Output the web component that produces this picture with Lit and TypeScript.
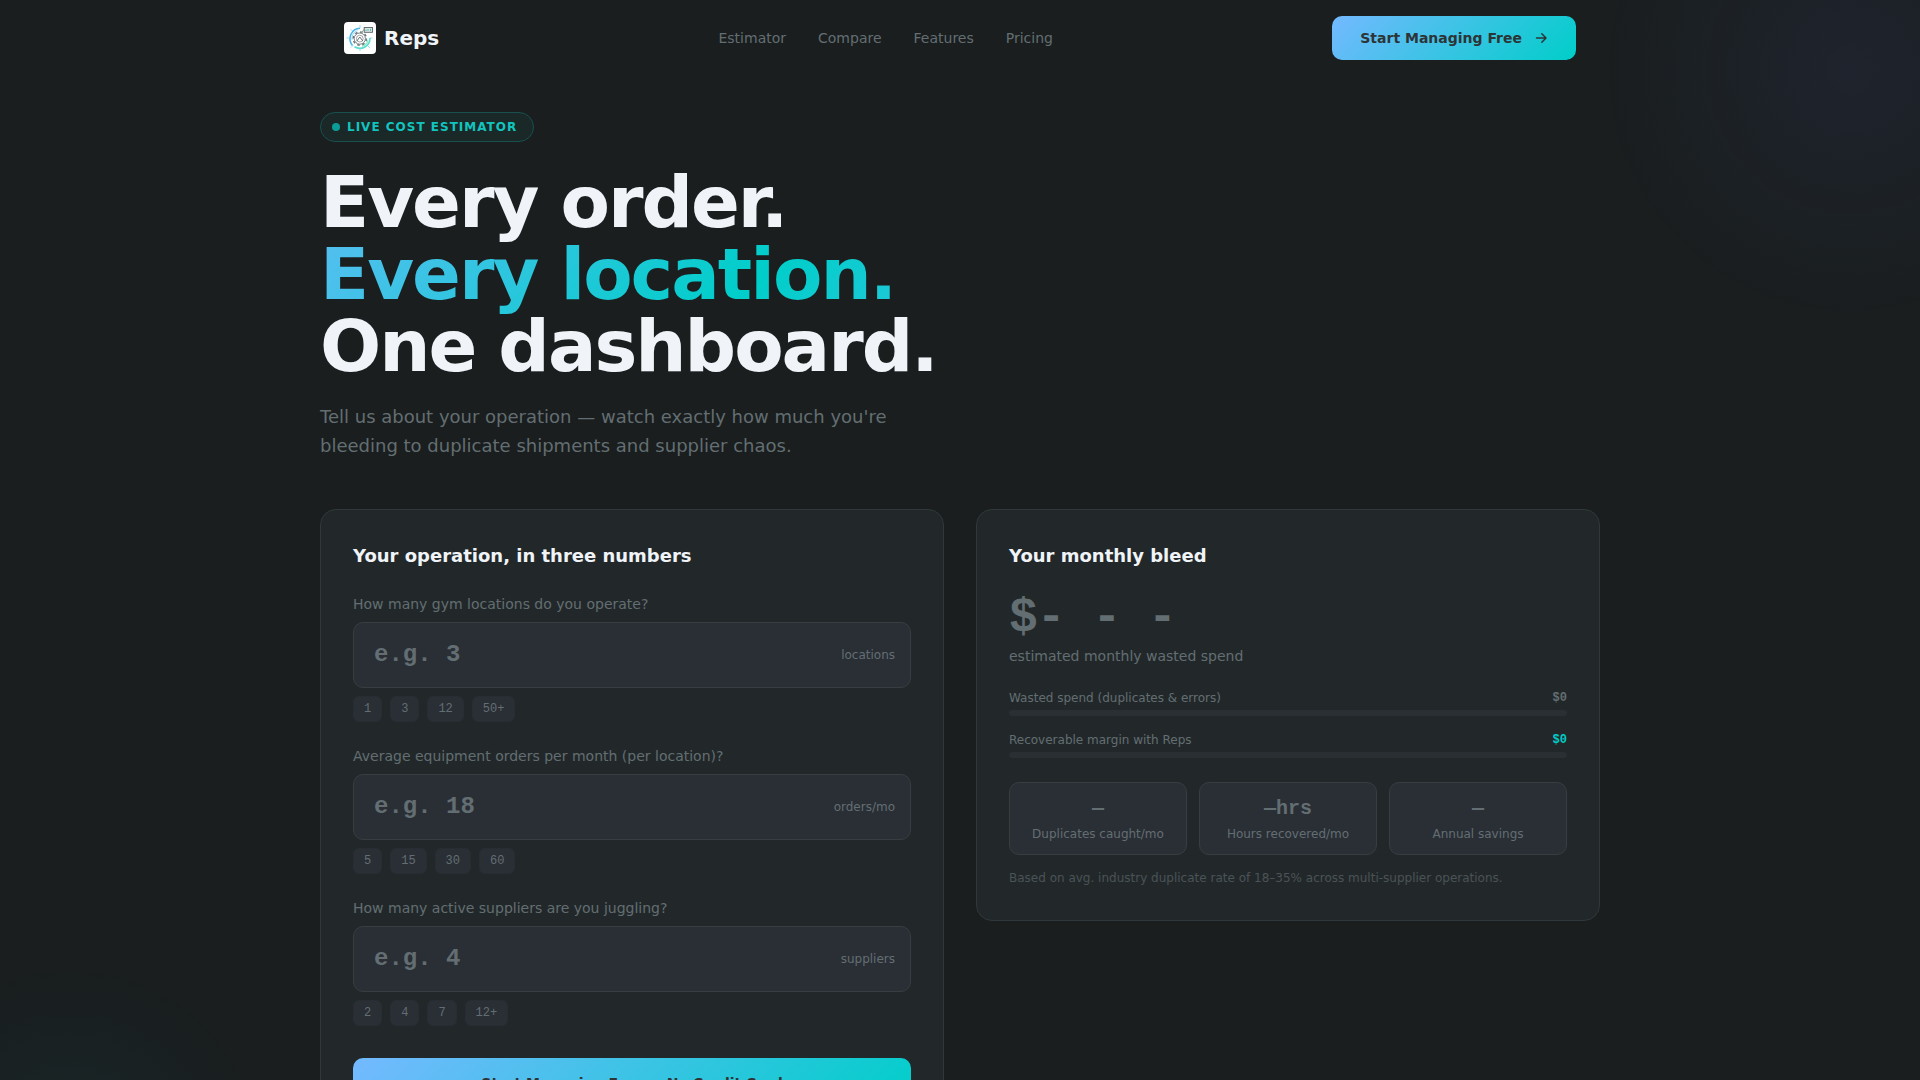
import { LitElement, html, css } from "lit";
import { customElement, property } from "lit/decorators.js";

const SANS = css`"DejaVu Sans", sans-serif`;
const MONO = css`"Liberation Mono", monospace`;

@customElement("estimator-field")
class EstimatorField extends LitElement {
  @property() label = "";
  @property() hint = "";
  @property() unit = "";
  @property({ attribute: false }) presets: string[] = [];

  static styles = css`
    :host { display: block; }
    .label {
      display: block;
      margin-bottom: 7px;
      font-size: 14px;
      line-height: 22px;
      color: #636e72;
    }
    .box {
      display: flex;
      align-items: center;
      gap: 12px;
      box-sizing: border-box;
      height: 66px;
      padding: 0 15px 0 20px;
      border: 1px solid #363e42;
      border-radius: 10px;
      background: #2a2f36;
    }
    .box:focus-within { border-color: #00cec9; }
    .input {
      flex: 1;
      min-width: 0;
      padding: 0;
      border: 0;
      outline: 0;
      background: none;
      color: #f0f4f8;
      font: 700 24px/32px ${MONO};
    }
    .input::placeholder { color: #636e72; opacity: 1; }
    .unit { font-size: 12px; line-height: 20px; color: #636e72; }
    .presets { display: flex; gap: 8px; margin-top: 8px; }
    .preset {
      padding: 4px 10px;
      border: 1px solid #282d33;
      border-radius: 6px;
      background: #2a2f36;
      color: #636e72;
      font: 12px/16px ${MONO};
      cursor: pointer;
    }
  `;

  private choose(value: string) {
    const input = this.renderRoot.querySelector("input");
    if (input) input.value = String(parseInt(value, 10));
  }

  render() {
    return html`
      <label class="label" for="value">${this.label}</label>
      <div class="box">
        <input class="input" id="value" inputmode="numeric" placeholder=${this.hint} />
        <span class="unit">${this.unit}</span>
      </div>
      <div class="presets">
        ${this.presets.map(
          (p) => html`<button class="preset" type="button" @click=${() => this.choose(p)}>${p}</button>`
        )}
      </div>
    `;
  }
}

@customElement("app-root")
class AppRoot extends LitElement {
  static styles = css`
    :host {
      display: block;
      min-height: 100vh;
      overflow: hidden;
      background: #1a1e1f;
      color: #f0f4f8;
      font-family: ${SANS};
    }
    .glow { position: fixed; border-radius: 50%; pointer-events: none; }
    .glow-blue {
      top: -180px;
      right: -180px;
      width: 500px;
      height: 500px;
      background: radial-gradient(circle, rgba(90, 110, 220, 0.08), transparent 70%);
    }
    .glow-teal {
      bottom: -280px;
      left: -130px;
      width: 400px;
      height: 400px;
      background: radial-gradient(circle, rgba(0, 190, 206, 0.05), transparent 70%);
    }
    .page { position: relative; max-width: 1280px; margin: 0 auto; }
    .nav {
      display: flex;
      align-items: center;
      justify-content: space-between;
      padding: 16px 24px;
    }
    .brand {
      display: flex;
      align-items: center;
      gap: 8px;
      color: #f0f4f8;
      font-size: 20px;
      font-weight: 700;
      line-height: 32px;
      text-decoration: none;
    }
    .logo { display: block; width: 32px; height: 32px; }
    .links { display: flex; gap: 32px; }
    .link { color: #636e72; font-size: 14px; line-height: 22px; text-decoration: none; }
    .cta {
      display: flex;
      align-items: center;
      justify-content: center;
      gap: 10px;
      box-sizing: border-box;
      border-radius: 10px;
      background: linear-gradient(135deg, #74b9ff, #00cec9);
      color: #2d3436;
      font-size: 14px;
      font-weight: 700;
      line-height: 22px;
      text-decoration: none;
    }
    .cta-nav { padding: 11px 28px; }
    .cta-wide { padding: 14px 28px; margin-top: 32px; }
    .arrow { display: block; width: 16px; height: 16px; }
    .hero { padding-top: 36px; }
    .badge {
      display: inline-flex;
      align-items: center;
      gap: 7px;
      padding: 4px 16px 4px 11px;
      border: 1px solid #17504f;
      border-radius: 16px;
      background: #1a2828;
      color: #12c4bf;
      font-size: 12px;
      font-weight: 700;
      letter-spacing: 1px;
      line-height: 20px;
      vertical-align: top;
    }
    .dot { width: 8px; height: 8px; border-radius: 50%; background: #0d9b98; }
    .title {
      margin: 24px 0 20px;
      font-size: 72px;
      font-weight: 800;
      letter-spacing: -2px;
      line-height: 72px;
    }
    .accent {
      background: linear-gradient(135deg, #74b9ff, #00cec9, #74b9ff) 23% 50% / 200% 200%;
      -webkit-background-clip: text;
      background-clip: text;
      color: transparent;
    }
    .lead {
      max-width: 600px;
      margin: 0 0 49px;
      color: #636e72;
      font-size: 18px;
      line-height: 29px;
    }
    .columns {
      display: grid;
      grid-template-columns: repeat(2, minmax(0, 1fr));
      align-items: start;
      gap: 32px;
    }
    .card {
      padding: 32px;
      border: 1px solid #2f383a;
      border-radius: 16px;
      background: #22282a;
    }
    .heading { margin: 0 0 24px; font-size: 18px; font-weight: 700; line-height: 27px; }
    .fields { display: flex; flex-direction: column; gap: 23px; }
    .total {
      margin: 0;
      color: #636e72;
      font: 700 48px/50px ${MONO};
      letter-spacing: -1px;
      white-space: pre;
    }
    .caption { margin: 2px 0 21px; color: #636e72; font-size: 14px; line-height: 22px; }
    .meter { margin-bottom: 14px; }
    .meter-row {
      display: flex;
      justify-content: space-between;
      margin-bottom: 2px;
      color: #636e72;
      font-size: 12px;
      line-height: 20px;
    }
    .amount { font-family: ${MONO}; font-weight: 700; }
    .gain { color: #00cec9; }
    .track { height: 6px; border-radius: 3px; background: #2a2f33; }
    .stats { display: grid; grid-template-columns: repeat(3, minmax(0, 1fr)); gap: 12px; margin-top: 24px; }
    .stat {
      padding: 12px 12px 9px;
      border: 1px solid #363e42;
      border-radius: 10px;
      background: #2a2f36;
      color: #636e72;
      text-align: center;
    }
    .value { font: 700 20px/28px ${MONO}; }
    .name { font-size: 12px; line-height: 22px; }
    .note { margin: 14px 0 0; color: #4a5356; font-size: 12px; line-height: 19px; }
    @media (max-width: 900px) {
      .columns { grid-template-columns: minmax(0, 1fr); }
      .links { display: none; }
    }
  `;

  render() {
    return html`
      <div class="glow glow-blue"></div>
      <div class="glow glow-teal"></div>
      <div class="page">
        <nav class="nav">
          <a class="brand" href="#top">
            <svg class="logo" viewBox="0 0 32 32" fill="none" aria-hidden="true">
              <rect width="32" height="32" rx="4" fill="#fff" />
              <path d="M16 6.200A10.500 10.500 0 0 0 8.500 23.500" stroke="#4bb4ea" stroke-width="1.600" />
              <path d="M13.500 8.500A8.500 8.500 0 0 0 8 18" stroke="#9bd8f5" stroke-width="1" />
              <path d="M10.500 24.800A10.200 10.200 0 0 0 26 16" stroke="#58dccb" stroke-width="1.600" />
              <path d="M18 24.300A8.500 8.500 0 0 0 24 18" stroke="#8ceacb" stroke-width="1.200" />
              <path d="M16 3v3M2.500 16H6M16 26v3M6.500 7l2 2M7 25.500l2-2M24 24l2 2M26 16h2.500" stroke="#7fd4ee" stroke-width="0.800" />
              <circle cx="15.800" cy="16.600" r="6.600" stroke="#6b7478" stroke-width="1.500" stroke-dasharray="2.600 2.580" />
              <circle cx="15.800" cy="16.600" r="5.600" stroke="#6b7478" stroke-width="0.900" />
              <circle cx="15.800" cy="16.600" r="3.400" stroke="#868e92" stroke-width="0.800" />
              <path d="M12.800 19L15.800 15l3 4" stroke="#5a6266" stroke-width="0.900" />
              <path d="M17 11l4-4.500" stroke="#8a9296" stroke-width="1" />
              <rect x="20.200" y="5.500" width="8.300" height="4.800" fill="#dfe6e6" stroke="#5a6266" stroke-width="0.900" />
              <path d="M22 9V7.500M24 9V7M26.500 9V6.800" stroke="#4cc4a8" stroke-width="1" />
            </svg>
            Reps
          </a>
          <div class="links">
            <a class="link" href="#estimator">Estimator</a>
            <a class="link" href="#compare">Compare</a>
            <a class="link" href="#features">Features</a>
            <a class="link" href="#pricing">Pricing</a>
          </div>
          <a class="cta cta-nav" href="#start">
            Start Managing Free
            <svg class="arrow" viewBox="0 0 16 16" fill="none" stroke="currentColor" stroke-width="1.500"
              stroke-linecap="round" stroke-linejoin="round" aria-hidden="true">
              <path d="M4.500 8h9.500M9.800 3.800L14 8l-4.200 4.200" />
            </svg>
          </a>
        </nav>
        <main class="hero" id="top">
          <div class="badge"><span class="dot"></span>LIVE COST ESTIMATOR</div>
          <h1 class="title">Every order.<br /><span class="accent">Every location.</span><br />One dashboard.</h1>
          <p class="lead">
            Tell us about your operation — watch exactly how much you're bleeding to duplicate shipments and
            supplier chaos.
          </p>
          <div class="columns" id="estimator">
            <section class="card">
              <h2 class="heading">Your operation, in three numbers</h2>
              <div class="fields">
                <estimator-field label="How many gym locations do you operate?" hint="e.g. 3" unit="locations"
                  .presets=${["1", "3", "12", "50+"]}></estimator-field>
                <estimator-field label="Average equipment orders per month (per location)?" hint="e.g. 18"
                  unit="orders/mo" .presets=${["5", "15", "30", "60"]}></estimator-field>
                <estimator-field label="How many active suppliers are you juggling?" hint="e.g. 4" unit="suppliers"
                  .presets=${["2", "4", "7", "12+"]}></estimator-field>
              </div>
              <a class="cta cta-wide" href="#start">Start Managing Free — No Credit Card</a>
            </section>
            <section class="card">
              <h2 class="heading">Your monthly bleed</h2>
              <p class="total">$- - -</p>
              <p class="caption">estimated monthly wasted spend</p>
              <div class="meter">
                <div class="meter-row"><span>Wasted spend (duplicates &amp; errors)</span><span class="amount">$0</span></div>
                <div class="track"></div>
              </div>
              <div class="meter">
                <div class="meter-row"><span>Recoverable margin with Reps</span><span class="amount gain">$0</span></div>
                <div class="track"></div>
              </div>
              <div class="stats">
                <div class="stat"><div class="value">—</div><div class="name">Duplicates caught/mo</div></div>
                <div class="stat"><div class="value">—hrs</div><div class="name">Hours recovered/mo</div></div>
                <div class="stat"><div class="value">—</div><div class="name">Annual savings</div></div>
              </div>
              <p class="note">Based on avg. industry duplicate rate of 18–35% across multi-supplier operations.</p>
            </section>
          </div>
        </main>
      </div>
    `;
  }
}
